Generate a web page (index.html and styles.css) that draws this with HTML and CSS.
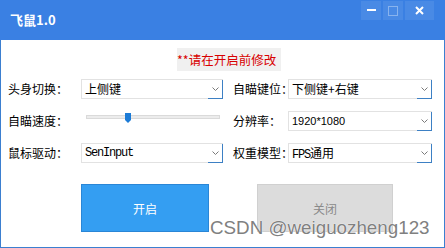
FILE: index.html
```html
<!DOCTYPE html>
<html lang="zh">
<head>
    <meta charset="UTF-8">
    <title>飞鼠1.0</title>
    <link rel="stylesheet" href="styles.css">
</head>
<body>
    <div class="window">
        <div class="titlebar">
            <span class="title">飞鼠1.0</span>
            <div class="win-controls">
                <span class="win-btn">
                    <svg width="9" height="3" viewBox="0 0 9 3"><rect x="0" y="0" width="9" height="2" fill="#fff"/></svg>
                </span>
                <span class="win-btn">
                    <svg width="10" height="10" viewBox="0 0 10 10"><rect x="0.5" y="0.5" width="9" height="9" fill="none" stroke="rgba(255,255,255,0.35)"/></svg>
                </span>
                <span class="win-btn win-close">
                    <svg width="9" height="9" viewBox="0 0 9 9"><path d="M1 1 L8 8 M8 1 L1 8" stroke="#fff" stroke-width="2"/></svg>
                </span>
            </div>
        </div>

        <div class="content">
            <div class="notice">**请在开启前修改</div>

            <div class="form">
                <label class="label">头身切换：</label>
                <div class="combo">
                    <span class="combo-value">上侧键</span>
                    <span class="combo-arrow"><svg width="7" height="4" viewBox="0 0 7 4"><polyline points="0.5,0.5 3.5,3.5 6.5,0.5" fill="none" stroke="#7a7a7a"/></svg></span>
                </div>
                <label class="label label-right">自瞄键位：</label>
                <div class="combo">
                    <span class="combo-value">下侧键+右键</span>
                    <span class="combo-arrow"><svg width="7" height="4" viewBox="0 0 7 4"><polyline points="0.5,0.5 3.5,3.5 6.5,0.5" fill="none" stroke="#7a7a7a"/></svg></span>
                </div>

                <label class="label">自瞄速度：</label>
                <div class="slider">
                    <div class="slider-track"></div>
                    <svg class="slider-thumb" width="6" height="10" viewBox="0 0 6 10"><path d="M0 0 H6 V7 L3 10 L0 7 Z" fill="#1c7bd6"/></svg>
                </div>
                <label class="label label-right">分辨率：</label>
                <div class="combo">
                    <span class="combo-value combo-num">1920*1080</span>
                    <span class="combo-arrow"><svg width="7" height="4" viewBox="0 0 7 4"><polyline points="0.5,0.5 3.5,3.5 6.5,0.5" fill="none" stroke="#7a7a7a"/></svg></span>
                </div>

                <label class="label">鼠标驱动：</label>
                <div class="combo">
                    <span class="combo-value combo-mono">SenInput</span>
                    <span class="combo-arrow"><svg width="7" height="4" viewBox="0 0 7 4"><polyline points="0.5,0.5 3.5,3.5 6.5,0.5" fill="none" stroke="#7a7a7a"/></svg></span>
                </div>
                <label class="label label-right">权重模型：</label>
                <div class="combo">
                    <span class="combo-value"><span class="combo-mono">FPS</span>通用</span>
                    <span class="combo-arrow"><svg width="7" height="4" viewBox="0 0 7 4"><polyline points="0.5,0.5 3.5,3.5 6.5,0.5" fill="none" stroke="#7a7a7a"/></svg></span>
                </div>
            </div>

            <div class="actions">
                <button class="btn btn-start">开启</button>
                <button class="btn btn-stop">关闭</button>
            </div>
        </div>

        <div class="watermark">CSDN @weiguozheng123</div>
    </div>
</body>
</html>
```

FILE: styles.css
```css
body {
    margin: 0;
    font-family: "Noto Sans CJK SC", "Liberation Sans", sans-serif;
    background-color: #ffffff;
}

.window {
    position: relative;
    width: 445px;
    height: 248px;
    display: flex;
    flex-direction: column;
}

.titlebar {
    height: 40px;
    flex-shrink: 0;
    background-color: #3a80e3;
    display: flex;
    align-items: flex-start;
}

.title {
    padding-left: 10px;
    line-height: 40px;
    font-size: 13px;
    font-weight: bold;
    color: #ffffff;
}

.win-controls {
    margin-left: auto;
    margin-right: 11px;
    margin-top: 1px;
    display: flex;
    gap: 2px;
}

.win-btn {
    width: 20px;
    height: 19px;
    background-color: rgba(255, 255, 255, 0.08);
    display: flex;
    align-items: center;
    justify-content: center;
}

.win-btn svg {
    display: block;
}

.win-close {
    width: 29px;
}

.content {
    flex: 1;
    border: 1px solid #3b7fd0;
    border-top: none;
    box-sizing: border-box;
}

.notice {
    margin: 8px 0 0 176px;
    width: 104px;
    height: 23px;
    line-height: 23px;
    background-color: #f0f0f0;
    color: #d80000;
    font-size: 12.5px;
    white-space: nowrap;
}

.form {
    margin-top: 8px;
    padding-left: 7px;
    display: grid;
    grid-template-columns: 73px 142px 65px 144px;
    grid-auto-rows: 20px;
    row-gap: 12px;
}

.label {
    font-size: 12px;
    line-height: 20px;
    color: #000000;
    white-space: nowrap;
}

.label-right {
    padding-left: 10px;
}

.combo {
    display: flex;
    border: 1px solid #e2e2e2;
    background-color: #ffffff;
    box-sizing: border-box;
}

.combo-value {
    flex: 1;
    padding-left: 3px;
    font-size: 12px;
    line-height: 18px;
    color: #000000;
    white-space: nowrap;
}

.combo-num {
    font-family: "Liberation Sans", sans-serif;
    font-size: 11px;
}

.combo-mono {
    font-family: "Liberation Mono", "DejaVu Sans Mono", monospace;
    font-size: 12px;
    letter-spacing: -1.2px;
}

.combo-arrow {
    width: 14px;
    margin: 0 -1px -1px 0;
    border-right: 1px solid #3d80c4;
    border-bottom: 1px solid #3d80c4;
    display: flex;
    align-items: center;
    justify-content: center;
}

.combo-arrow svg {
    display: block;
}

.slider {
    position: relative;
    margin: 4px 3px 0 5px;
    align-self: start;
    height: 12px;
}

.slider-track {
    height: 4px;
    border: 1px solid #dadada;
    background-color: #ececec;
    box-sizing: border-box;
}

.slider-thumb {
    position: absolute;
    left: 39px;
    top: -2px;
}

.actions {
    margin-top: 21px;
    padding-left: 80px;
    display: flex;
    gap: 48px;
}

.btn {
    height: 48px;
    font-family: "Noto Sans CJK SC", sans-serif;
    font-size: 12px;
    border: 1px solid;
    padding: 0;
}

.btn-start {
    width: 128px;
    background-color: #349ef2;
    border-color: #2a86d6;
    color: #ffffff;
}

.btn-stop {
    width: 136px;
    background-color: #dcdcdc;
    border-color: #d0d0d0;
    color: #8a8a8a;
}

.watermark {
    position: absolute;
    left: 210px;
    top: 218px;
    font-family: "Liberation Sans", sans-serif;
    font-size: 18.8px;
    line-height: 19px;
    color: #808080;
    text-shadow: 0 0 1px #ffffff, 0 0 1px #ffffff;
    white-space: nowrap;
}
```
